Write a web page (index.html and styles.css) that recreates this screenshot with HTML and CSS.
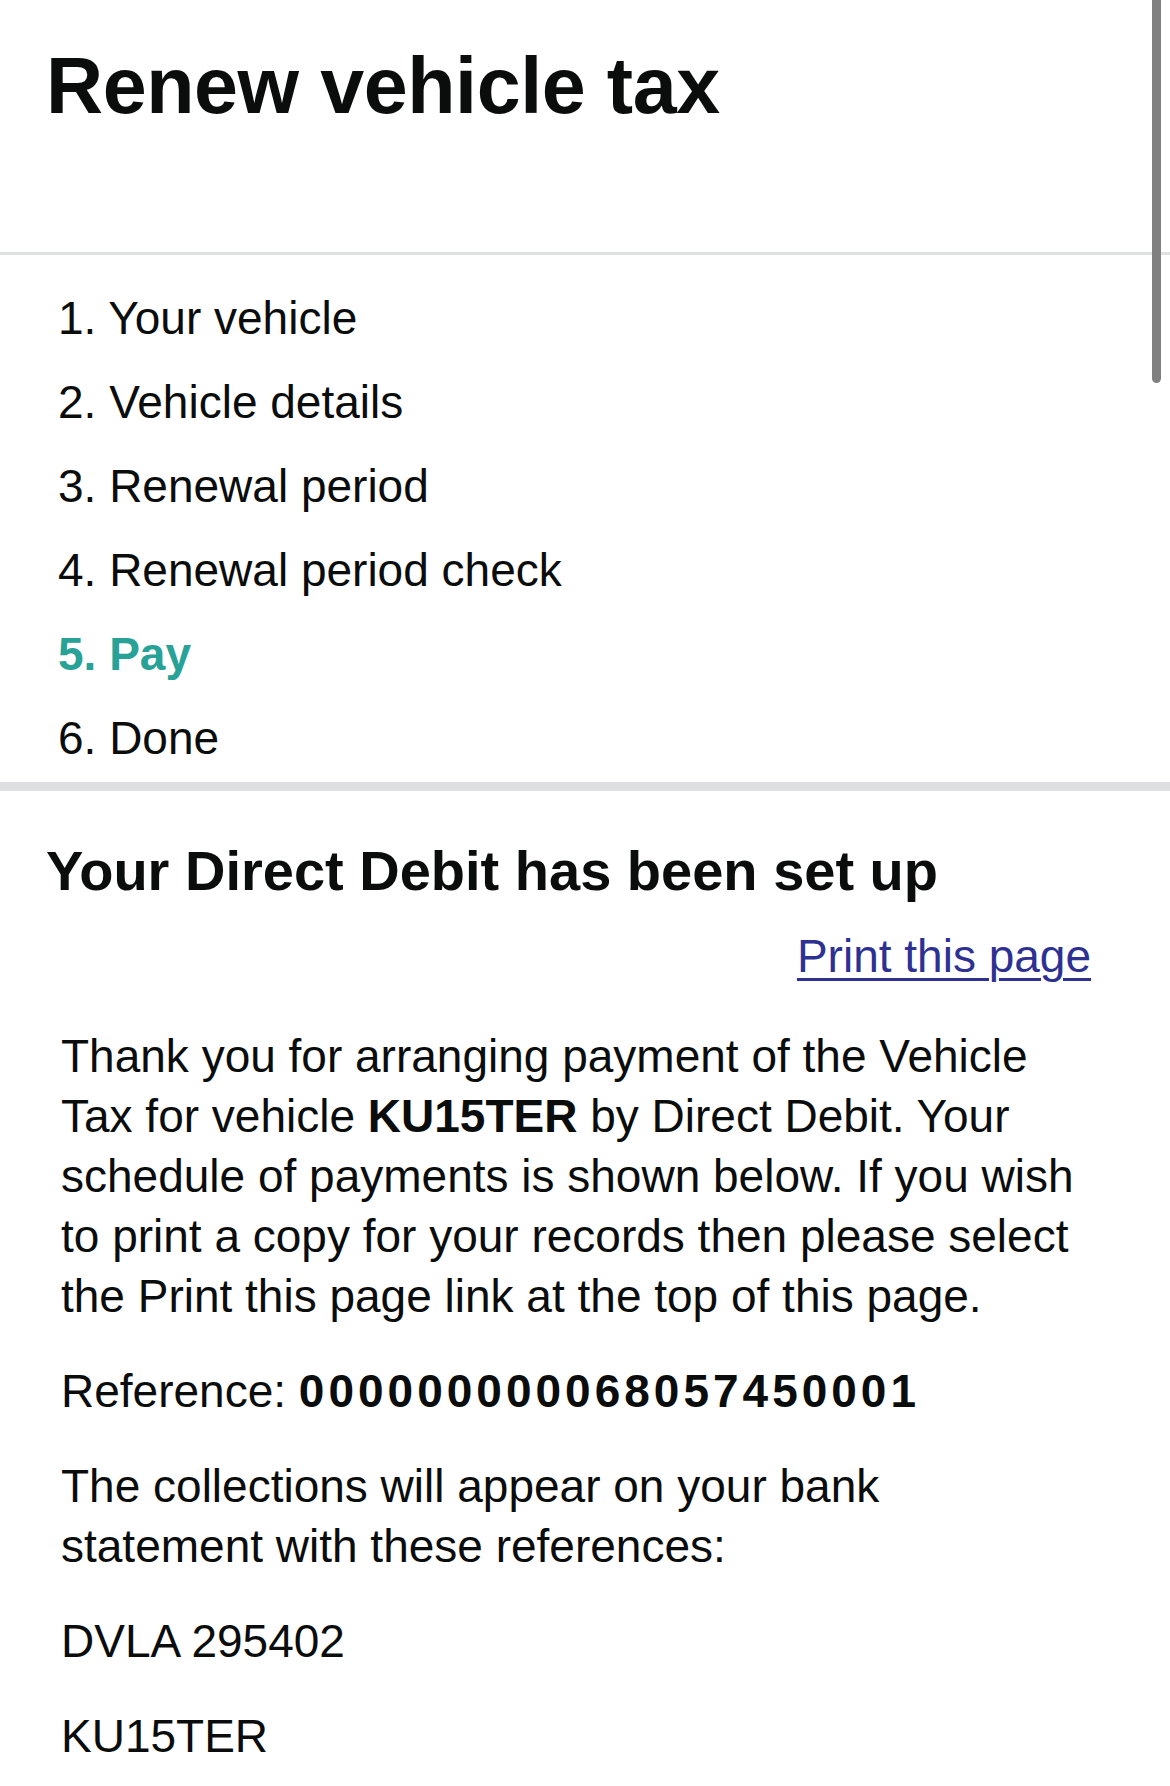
FILE: index.html
```html
<!DOCTYPE html>
<html lang="en">
<head>
<meta charset="utf-8">
<title>Renew vehicle tax</title>
<link rel="stylesheet" href="styles.css">
</head>
<body>
<header class="page-header">
  <h1 class="page-title">Renew vehicle tax</h1>
</header>
<nav class="steps">
  <ol class="step-list">
    <li class="step">1. Your vehicle</li>
    <li class="step">2. Vehicle details</li>
    <li class="step">3. Renewal period</li>
    <li class="step">4. Renewal period check</li>
    <li class="step step-current">5. Pay</li>
    <li class="step">6. Done</li>
  </ol>
</nav>
<main class="content">
  <h2 class="content-title">Your Direct Debit has been set up</h2>
  <div class="print-row"><a class="print-link" href="#">Print this page</a></div>
  <div class="body-text">
    <p class="para">Thank you for arranging payment of the Vehicle<br>Tax for vehicle <strong>KU15TER</strong> by Direct Debit. Your<br>schedule of payments is shown below. If you wish<br>to print a copy for your records then please select<br>the Print this page link at the top of this page.</p>
    <p class="para">Reference: <strong class="ref-number">000000000068057450001</strong></p>
    <p class="para">The collections will appear on your bank<br>statement with these references:</p>
    <p class="para">DVLA 295402</p>
    <p class="para">KU15TER</p>
  </div>
</main>
<div class="scrollbar"></div>
</body>
</html>
```
FILE: styles.css
```css
html, body {
  margin: 0;
  padding: 0;
  background: #ffffff;
}
body {
  position: relative;
  font-family: "Liberation Sans", Arial, sans-serif;
  color: #0b0c0c;
  width: 1170px;
  height: 1786px;
  overflow: hidden;
}
.page-header {
  padding: 41px 46px 121px 46px;
  border-bottom: 3px solid #dfe0e2;
}
.page-title {
  margin: 0;
  font-size: 79px;
  line-height: 90px;
  font-weight: 700;
  letter-spacing: -0.4px;
}
.steps {
  padding: 21px 0 2px 58px;
  border-bottom: 9px solid #dedfe1;
}
.step-list {
  list-style: none;
  margin: 0;
  padding: 0;
}
.step {
  font-size: 46px;
  line-height: 84px;
}
.step-current {
  color: #28a197;
  font-weight: 700;
}
.content {
  padding: 47px 79px 0 46px;
}
.content-title {
  margin: 0;
  font-size: 56px;
  line-height: 66px;
  font-weight: 700;
}
.print-row {
  margin-top: 22px;
  display: flex;
  justify-content: flex-end;
}
.print-link {
  font-size: 46px;
  line-height: 60px;
  color: #2e3192;
  text-decoration: underline;
  text-decoration-thickness: 3px;
  text-underline-offset: 6px;
}
.body-text {
  margin-top: 40px;
  padding-left: 15px;
}
.para {
  margin: 0 0 35px 0;
  font-size: 46px;
  line-height: 60px;
}
.ref-number {
  letter-spacing: 4px;
}
.scrollbar {
  position: absolute;
  top: -6px;
  right: 9px;
  width: 9px;
  height: 389px;
  border-radius: 5px;
  background: #808080;
}
```
